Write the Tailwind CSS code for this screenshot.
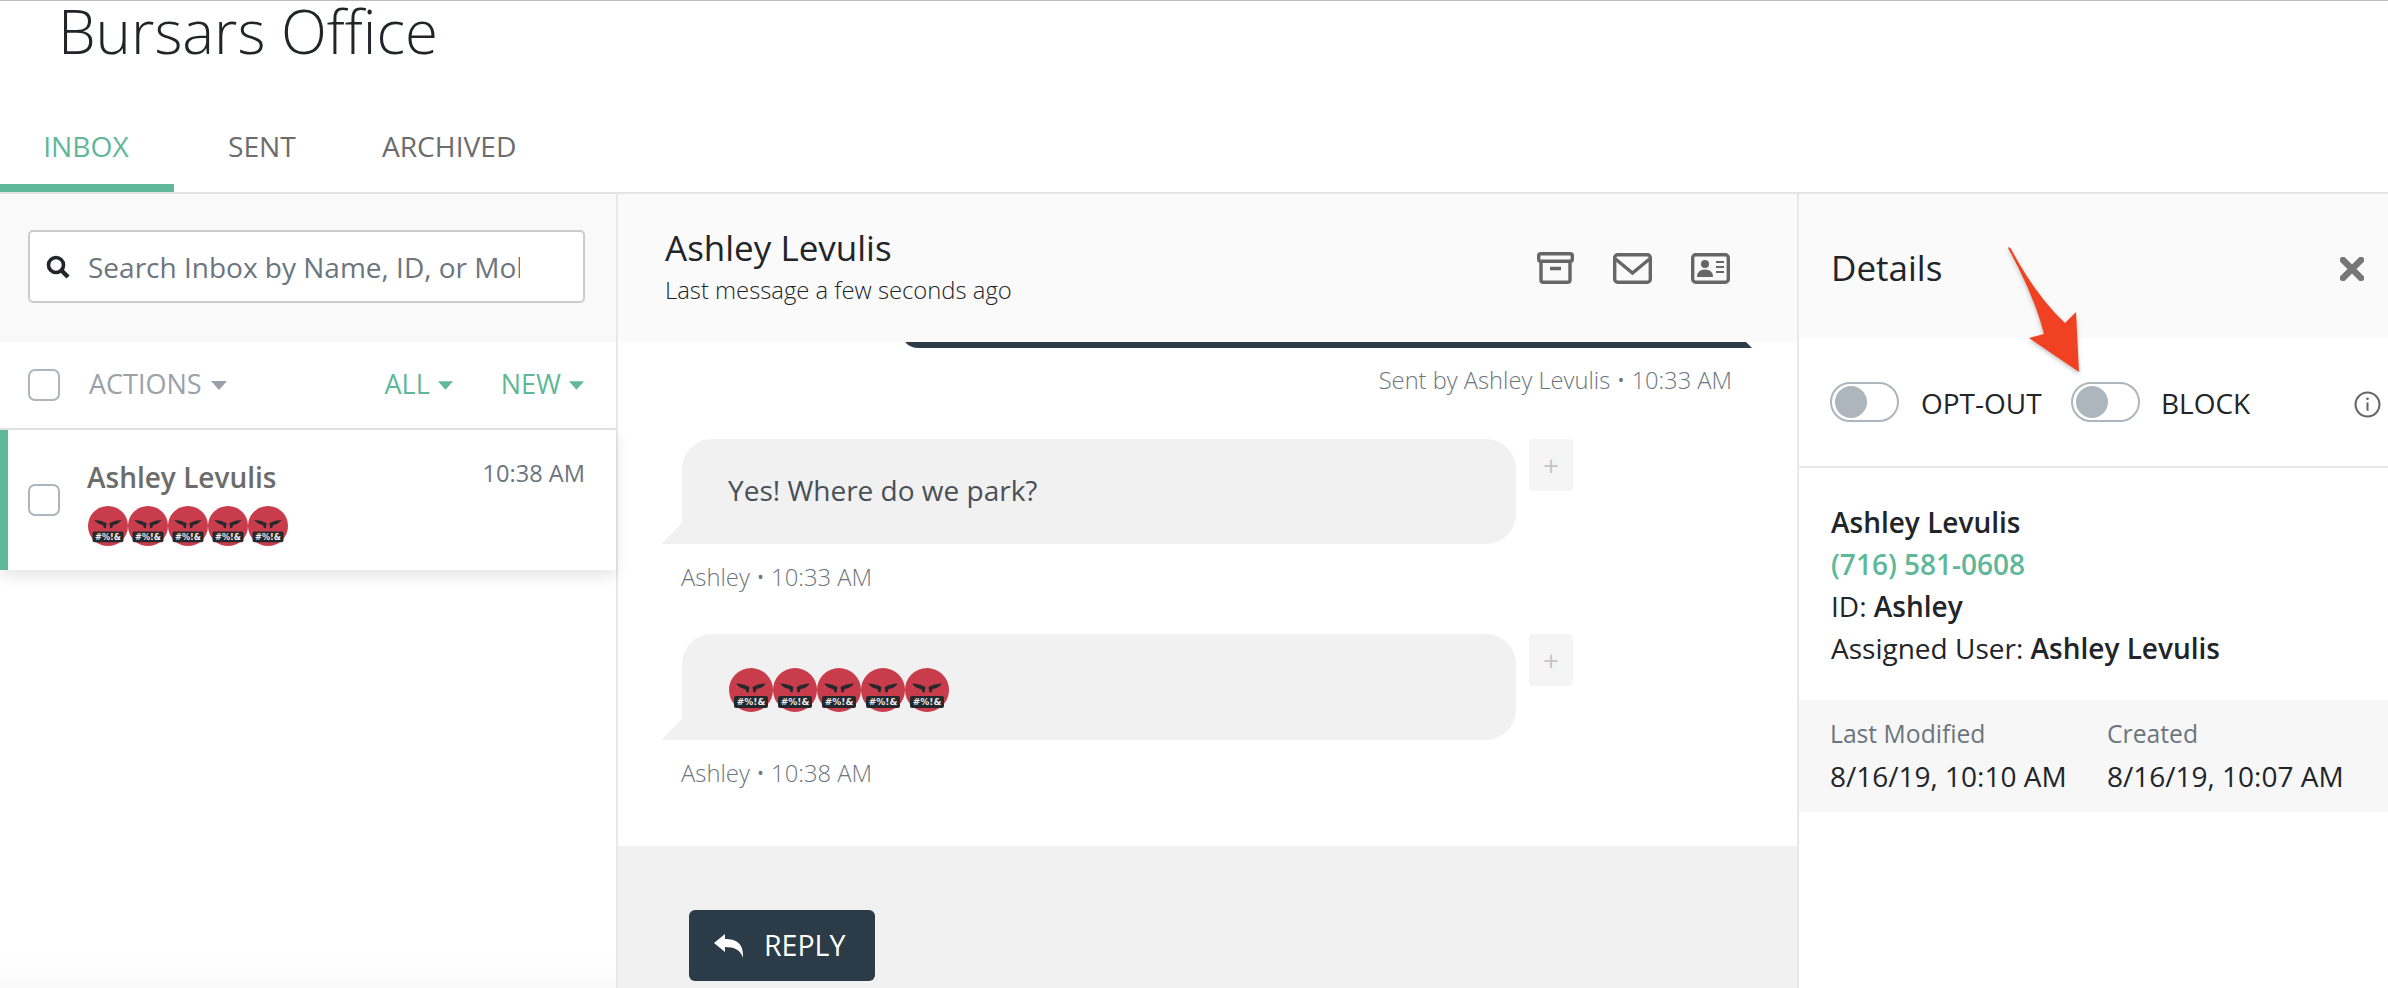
<!DOCTYPE html>
<html lang="en">
<head>
    <meta charset="UTF-8">
    <meta name="viewport" content="width=device-width, initial-scale=1.0">
    <title>Bursars Office</title>
    <script src="https://cdn.jsdelivr.net/npm/@tailwindcss/browser@4"></script>
</head>
<body class="h-[988px] overflow-hidden bg-white font-['Open_Sans',sans-serif] text-[#212529]">

    <!-- shared emoji -->
    <svg class="hidden">
        <symbol id="rage" viewBox="0 0 44 44">
            <circle cx="22" cy="22" r="22" fill="#c93c4c"></circle>
            <path d="M7 15.5 Q14 15.5 20.5 19 L19.5 24.5 Q17 25 16.5 21 Q11 20.5 7 15.5Z" fill="#25292e"></path>
            <path d="M37 15.5 Q30 15.5 23.5 19 L24.5 24.5 Q27 25 27.5 21 Q33 20.5 37 15.5Z" fill="#25292e"></path>
            <rect x="5" y="28" width="34" height="12" rx="2" fill="#25292e"></rect>
            <text x="22" y="37.3" text-anchor="middle" font-size="9" font-weight="700" fill="#eeeeee" font-family="DejaVu Sans, sans-serif">#%!&amp;</text>
        </symbol>
    </svg>

    <!-- Header -->
    <div class="border-t border-[#bbbbbb]">
        <div class="h-[107px] pl-[58px]">
            <h1 class="text-[60px] leading-[61px] font-light">Bursars Office</h1>
        </div>
        <div class="flex h-[86px] items-start border-b-2 border-[#e4e4e4] text-[28.2px] text-[#6c6c6c]">
            <a class="flex h-[84px] w-[174px] items-center justify-center border-b-8 border-[#5eb899] pr-[2px] text-[#5eb899]">INBOX</a>
            <a class="ml-[54px] flex h-[76px] items-center">SENT</a>
            <a class="ml-[86px] flex h-[76px] items-center">ARCHIVED</a>
        </div>
    </div>

    <div class="flex h-[794px]">

        <!-- Inbox list -->
        <div class="flex w-[618px] shrink-0 flex-col border-r-2 border-[#e8e8e8]">
            <div class="h-[148px] bg-[#f9f9f9] pt-[36px] pl-[28px]">
                <div class="flex h-[73px] w-[557px] items-center rounded-[5px] border-2 border-[#cccccc] bg-white pl-[16px]">
                    <svg class="h-[24px] w-[24px] shrink-0" viewBox="0 0 24 24" fill="none" stroke="#212529">
                        <circle cx="10" cy="10" r="7.5" stroke-width="3.6"></circle>
                        <path d="M15.5 15.5 L22 22" stroke-width="4.4"></path>
                    </svg>
                    <input type="text" placeholder="Search Inbox by Name, ID, or Mobile" class="ml-[18px] w-[432px] bg-transparent text-[28px] outline-none placeholder:text-[#6c757d]">
                </div>
            </div>
            <div class="flex h-[88px] items-center border-b-2 border-[#e4e4e4] pr-[32px] pl-[28px] text-[27px]">
                <span class="h-[32px] w-[32px] rounded-[7px] border-2 border-[#adb5bd]"></span>
                <span class="ml-[29px] pb-[2px] text-[#9aa1a8]">ACTIONS</span>
                <svg class="ml-[9px] h-[9px] w-[16px]" viewBox="0 0 16 9"><path d="M0 0H16L8 9Z" fill="#9aa1a8"></path></svg>
                <span class="ml-auto pb-[2px] text-[#5eb899]">ALL</span>
                <svg class="ml-[8px] h-[9px] w-[15px]" viewBox="0 0 16 9"><path d="M0 0H16L8 9Z" fill="#5eb899"></path></svg>
                <span class="ml-[48px] pb-[2px] text-[#5eb899]">NEW</span>
                <svg class="ml-[8px] h-[9px] w-[15px]" viewBox="0 0 16 9"><path d="M0 0H16L8 9Z" fill="#5eb899"></path></svg>
            </div>
            <div class="relative flex h-[140px] border-l-8 border-[#5eb899] bg-white pr-[31px] shadow-[0_6px_14px_rgba(0,0,0,0.1)]">
                <span class="mt-[54px] ml-[20px] h-[32px] w-[32px] rounded-[7px] border-2 border-[#adb5bd]"></span>
                <div class="ml-[27px] pt-[27px]">
                    <p class="text-[28px] leading-[40px] font-semibold text-[#6c6c6c]">Ashley Levulis</p>
                    <div class="mt-[9px] ml-[1px] flex">
                        <svg class="h-[40px] w-[40px]"><use href="#rage"></use></svg>
                        <svg class="h-[40px] w-[40px]"><use href="#rage"></use></svg>
                        <svg class="h-[40px] w-[40px]"><use href="#rage"></use></svg>
                        <svg class="h-[40px] w-[40px]"><use href="#rage"></use></svg>
                        <svg class="h-[40px] w-[40px]"><use href="#rage"></use></svg>
                    </div>
                </div>
                <span class="ml-auto pt-[27px] text-[23.6px] leading-[32px] text-[#6c757d]">10:38 AM</span>
            </div>
            <div class="mt-auto h-[38px] bg-linear-to-b from-white to-[#fafafa]"></div>
        </div>

        <!-- Conversation -->
        <div class="flex w-[1179px] shrink-0 flex-col">
            <div class="flex h-[148px] items-center justify-between bg-[#fafafa] pr-[67px] pl-[47px]">
                <div class="pb-[3px]">
                    <p class="mb-[3px] text-[35px] leading-[44px]">Ashley Levulis</p>
                    <p class="text-[23.8px] leading-[34px] font-light">Last message a few seconds ago</p>
                </div>
                <div class="flex items-center">
                    <svg class="h-[32px] w-[37px]" viewBox="0 0 37 32" fill="none" stroke="#666666" stroke-width="3.4">
                        <rect x="1.7" y="1.7" width="33.6" height="7.6" rx="2"></rect>
                        <path d="M4 10V28Q4 30.3 6.5 30.3H30.5Q33 30.3 33 28V10"></path>
                        <path d="M13 16.5H24" stroke-width="3.5"></path>
                    </svg>
                    <svg class="ml-[39px] h-[31px] w-[39px]" viewBox="0 0 39 31" fill="none" stroke="#666666" stroke-width="3.4">
                        <rect x="1.7" y="1.7" width="35.6" height="27.6" rx="3"></rect>
                        <path d="M2.5 6 L19.5 20 L36.5 6"></path>
                    </svg>
                    <svg class="ml-[39px] h-[31px] w-[39px]" viewBox="0 0 39 31" fill="none" stroke="#666666" stroke-width="3.4">
                        <rect x="1.7" y="1.7" width="35.6" height="27.6" rx="3"></rect>
                        <circle cx="14" cy="11" r="4" fill="#666666" stroke="none"></circle>
                        <path d="M6 24 Q6 16.5 14 16.5 Q22 16.5 22 24Z" fill="#666666" stroke="none"></path>
                        <path d="M25 9H33M25 14H33M25 19H33" stroke-width="2"></path>
                    </svg>
                </div>
            </div>

            <div class="h-[504px]">
                <svg class="ml-[287px] block h-[6px] w-[847px]" viewBox="0 0 847 6"><path d="M0 0H841L847 6H14Q5 6 0 0Z" fill="#2b3b48"></path></svg>
                <p class="mt-[16px] pr-[65px] text-right text-[23.7px] leading-[32px] font-light text-[#6c757d]">Sent by Ashley Levulis • 10:33 AM</p>

                <div class="mt-[43px] ml-[64px] flex items-start">
                    <div class="relative flex h-[105px] w-[834px] items-center rounded-[30px] rounded-bl-none bg-[#f1f1f1] pb-[3px] pl-[46px] text-[28px] text-[#495057]">
                        Yes! Where do we park?
                        <svg class="absolute bottom-0 -left-[21px] h-[21px] w-[21px]" viewBox="0 0 21 21"><path d="M21 0V21H0Z" fill="#f1f1f1"></path></svg>
                    </div>
                    <div class="ml-[13px] flex h-[52px] w-[44px] items-center justify-center rounded-[4px] bg-[#f5f5f5] text-[28px] text-[#c4c4c4]">+</div>
                </div>
                <p class="mt-[17px] ml-[63px] text-[23.8px] leading-[32px] font-light text-[#6c757d]">Ashley • 10:33 AM</p>

                <div class="mt-[41px] ml-[64px] flex items-start">
                    <div class="relative flex h-[106px] w-[834px] items-center rounded-[30px] rounded-bl-none bg-[#f1f1f1] pt-[6px] pl-[47px]">
                        <svg class="h-[44px] w-[44px]"><use href="#rage"></use></svg>
                        <svg class="h-[44px] w-[44px]"><use href="#rage"></use></svg>
                        <svg class="h-[44px] w-[44px]"><use href="#rage"></use></svg>
                        <svg class="h-[44px] w-[44px]"><use href="#rage"></use></svg>
                        <svg class="h-[44px] w-[44px]"><use href="#rage"></use></svg>
                        <svg class="absolute bottom-0 -left-[21px] h-[21px] w-[21px]" viewBox="0 0 21 21"><path d="M21 0V21H0Z" fill="#f1f1f1"></path></svg>
                    </div>
                    <div class="ml-[13px] flex h-[52px] w-[44px] items-center justify-center rounded-[4px] bg-[#f5f5f5] text-[28px] text-[#c4c4c4]">+</div>
                </div>
                <p class="mt-[17px] ml-[63px] text-[23.8px] leading-[32px] font-light text-[#6c757d]">Ashley • 10:38 AM</p>
            </div>

            <div class="h-[142px] bg-[#f1f1f1] pt-[64px] pl-[71px]">
                <button class="flex h-[71px] w-[186px] items-center rounded-[6px] bg-[#2b3b48] pl-[25px] text-[28.5px] text-white">
                    <svg class="h-[24px] w-[30px]" viewBox="0 0 30 24"><path d="M0 9 L11 0 V5 C22 5 30 9 29 24 C27 16 20 13 11 13 V18Z" fill="#ffffff"></path></svg>
                    <span class="ml-[20px]">REPLY</span>
                </button>
            </div>
        </div>

        <!-- Details -->
        <div class="min-w-0 flex-1 border-l-2 border-[#e8e8e8]">
            <div class="flex h-[144px] items-center justify-between bg-[#fafafa] pt-[5px] pr-[24px] pl-[32px]">
                <span class="text-[35px]">Details</span>
                <svg class="h-[24px] w-[24px]" viewBox="0 0 24 24"><path d="M3 3 L21 21 M21 3 L3 21" stroke="#777777" stroke-width="6.5" stroke-linecap="round"></path></svg>
            </div>
            <div class="flex h-[130px] items-center border-b-2 border-[#e8e8e8] pl-[31px] text-[28px]">
                <span class="flex h-[40px] w-[69px] shrink-0 items-center rounded-full border-2 border-[#adb5bd] pl-[3px]"><span class="h-[32px] w-[32px] rounded-full bg-[#adb5bd]"></span></span>
                <span class="ml-[22px] w-[150px] shrink-0 pt-[2px]">OPT-OUT</span>
                <span class="flex h-[40px] w-[69px] shrink-0 items-center rounded-full border-2 border-[#adb5bd] pl-[3px]"><span class="h-[32px] w-[32px] rounded-full bg-[#adb5bd]"></span></span>
                <span class="ml-[21px] w-[193px] shrink-0 pt-[2px]">BLOCK</span>
                <svg class="mt-[5px] h-[27px] w-[27px] shrink-0" viewBox="0 0 26 26" fill="none" stroke="#666666">
                    <circle cx="13" cy="13" r="11.5" stroke-width="2"></circle>
                    <path d="M13 11V19" stroke-width="2"></path>
                    <circle cx="13" cy="7.5" r="1.3" fill="#666666" stroke="none"></circle>
                </svg>
            </div>
            <div class="h-[232px] pt-[33px] pl-[32px] text-[28px] leading-[42px]">
                <p class="font-semibold">Ashley Levulis</p>
                <p class="font-semibold text-[#5eb899]">(716) 581-0608</p>
                <p>ID: <span class="font-semibold">Ashley</span></p>
                <p>Assigned User: <span class="font-semibold">Ashley Levulis</span></p>
            </div>
            <div class="flex h-[112px] bg-[#f7f7f7] pt-[13px] pl-[31px] leading-[42px]">
                <div class="w-[277px]">
                    <p class="text-[24.7px] text-[#6c757d]">Last Modified</p>
                    <p class="text-[28px]">8/16/19, 10:10 AM</p>
                </div>
                <div>
                    <p class="text-[24.7px] text-[#6c757d]">Created</p>
                    <p class="text-[28px]">8/16/19, 10:07 AM</p>
                </div>
            </div>
        </div>
    </div>

    <!-- Annotation arrow -->
    <svg class="absolute top-[240px] left-[2000px] h-[140px] w-[90px] drop-shadow-[0_2px_2px_rgba(0,0,0,0.25)]" viewBox="2000 240 90 140">
        <path d="M2008 248 Q2009 246 2011 249 Q2036 296 2065 323 L2076 312 L2079 372 L2029 338 L2044 334 Q2034 295 2008 248Z" fill="#f04223"></path>
    </svg>

</body>
</html>
